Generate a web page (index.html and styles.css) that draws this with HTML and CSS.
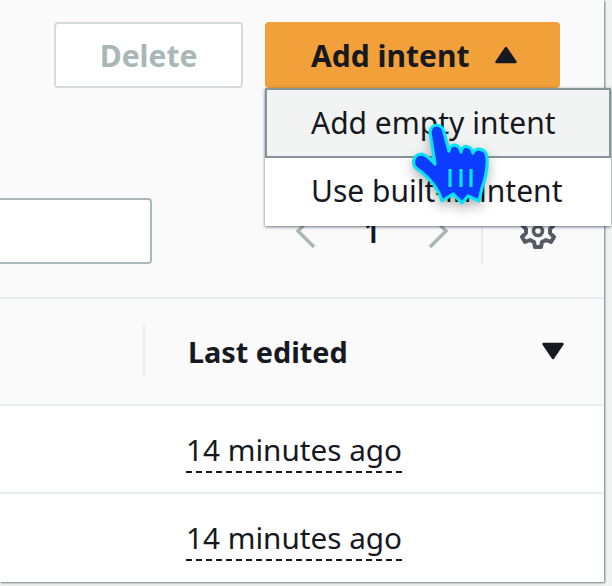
FILE: index.html
```html
<!DOCTYPE html>
<html lang="en">
<head>
<meta charset="utf-8">
<title>Intents</title>
<link rel="stylesheet" href="styles.css">
</head>
<body>
<main class="card">
  <header class="head">
    <div class="actions">
      <button class="btn btn-disabled">Delete</button>
      <div class="add-wrap">
        <button class="btn btn-primary">Add intent
          <svg class="caret" width="24" height="20" viewBox="0 0 24 20"><path d="M12 3 L21.5 17 H2.5 Z" fill="#16191f" stroke="#16191f" stroke-width="2.4" stroke-linejoin="round"/></svg>
        </button>
        <ul class="menu">
          <li class="menu-item menu-item-active">Add empty intent</li>
          <li class="menu-item menu-item-plain">Use built-in intent</li>
        </ul>
      </div>
    </div>
    <div class="tools">
      <div class="search"></div>
      <div class="pager">
        <svg width="20" height="36" viewBox="0 0 20 36"><path d="M18 2 L2 18 L18 34" fill="none" stroke="#aab7b8" stroke-width="3.6"/></svg>
        <span class="page">1</span>
        <svg width="20" height="36" viewBox="0 0 20 36"><path d="M2 2 L18 18 L2 34" fill="none" stroke="#aab7b8" stroke-width="3.6"/></svg>
      </div>
      <div class="gear">
        <svg width="36" height="36" viewBox="0 0 36 36"><path d="M15 2h6l1 5 4 2 5-2 3 5-4 4v4l4 4-3 5-5-2-4 2-1 5h-6l-1-5-4-2-5 2-3-5 4-4v-4l-4-4 3-5 5 2 4-2z" fill="none" stroke="#545b64" stroke-width="4" stroke-linejoin="round"/><circle cx="18" cy="18" r="4.5" fill="none" stroke="#545b64" stroke-width="3.6"/></svg>
      </div>
    </div>
  </header>
  <div class="cols">
    <div class="col-label">
      <span>Last edited</span>
      <svg width="24" height="20" viewBox="0 0 24 20"><path d="M2.5 3 H21.5 L12 17 Z" fill="#16191f" stroke="#16191f" stroke-width="2.4" stroke-linejoin="round"/></svg>
    </div>
  </div>
  <div class="row"><span class="when">14 minutes ago</span></div>
  <div class="row"><span class="when">14 minutes ago</span></div>
</main>
<svg class="cursor" width="110" height="110" viewBox="0 0 110 110">
  <path d="M30 22 C31 13 42 13 44 22 L49 41 C50 33 59 33 61 42 C62 34 71 35 73 43 C75 37 86 38 87 47 C88 60 85 70 82 78 L79 91 L68 86 L62 93 L53 84 L42 91 C39 80 30 68 16 58 C11 53 14 44 22 44 C27 45 31 50 35 54 Z" fill="#0b3cff" stroke="#0ae4f2" stroke-width="3.2" stroke-linejoin="round"/>
  <path d="M50 59V77M61 59V77M71 59V77" stroke="#0ae4f2" stroke-width="3.2" fill="none"/>
</svg>
</body>
</html>
```
FILE: styles.css
```css
* { box-sizing: border-box; }
html, body { margin: 0; padding: 0; }
body {
  width: 612px;
  height: 586px;
  overflow: hidden;
  background: #f2f3f3;
  font-family: "Noto Sans", "Open Sans", sans-serif;
  color: #16191f;
  position: relative;
}
.card {
  width: 604px;
  height: 582px;
  background: #fff;
  box-shadow: 1px 1px 2px rgba(0, 28, 36, .55);
}
.head {
  height: 299px;
  background: #fafafa;
  border-bottom: 2px solid #eaeded;
}
.actions {
  display: flex;
  justify-content: flex-end;
  gap: 22px;
  padding: 22px 44px 0 0;
}
.btn {
  height: 66px;
  border-radius: 4px;
  font: 700 30px "Noto Sans", sans-serif;
  color: #16191f;
  border: 0;
  padding: 0;
  display: flex;
  align-items: center;
}
.btn-disabled {
  width: 189px;
  background: #fff;
  border: 2px solid #d5dbdb;
  color: #aab7b8;
  justify-content: center;
}
.add-wrap { position: relative; }
.btn-primary {
  width: 295px;
  background: #f2a03a;
  gap: 25px;
  padding-left: 46px;
}
.menu {
  position: absolute;
  left: 0;
  top: 66px;
  width: 346px;
  margin: 0;
  padding: 0;
  list-style: none;
  background: #fff;
  box-shadow: 0 1px 3px rgba(0, 28, 36, .6);
  z-index: 2;
}
.menu-item {
  padding-left: 44px;
  font-size: 30px;
  display: flex;
  align-items: center;
  border: 2px solid transparent;
}
.menu-item-active {
  height: 70px;
  padding-bottom: 2px;
  background: #f2f3f3;
  border-color: #879596;
}
.menu-item-plain {
  height: 68px;
  padding-bottom: 4px;
}
.tools {
  display: flex;
  align-items: center;
  margin-top: 110px;
}
.search {
  width: 152px;
  height: 66px;
  background: #fff;
  border: 2px solid #aab7b8;
  border-left: 0;
  border-radius: 0 4px 4px 0;
}
.pager {
  margin-left: 144px;
  width: 152px;
  display: flex;
  align-items: center;
  justify-content: space-between;
}
.page { font-size: 30px; font-weight: 600; }
.gear {
  margin-left: 33px;
  padding-left: 37px;
  border-left: 2px solid #eaeded;
  height: 66px;
  display: flex;
  align-items: center;
}
.cols {
  height: 107px;
  background: #fafafa;
  border-bottom: 2px solid #eaeded;
  padding: 25px 0 0 143px;
}
.col-label {
  height: 54px;
  border-left: 2px solid #eaeded;
  display: flex;
  align-items: center;
  justify-content: space-between;
  padding: 0 39px 0 43px;
  font-weight: 700;
  font-size: 28.8px;
}
.row {
  height: 88px;
  padding: 22px 0 0 186px;
  font-size: 29.7px;
  border-bottom: 2px solid #eaeded;
}
.row:last-child { border-bottom: 0; }
.when {
  display: inline-block;
  line-height: 43px;
  border-bottom: 2px dashed #16191f;
}
.cursor {
  position: absolute;
  left: 400px;
  top: 110px;
  z-index: 3;
  filter: drop-shadow(0 5px 6px rgba(0, 0, 0, .3));
}
```
